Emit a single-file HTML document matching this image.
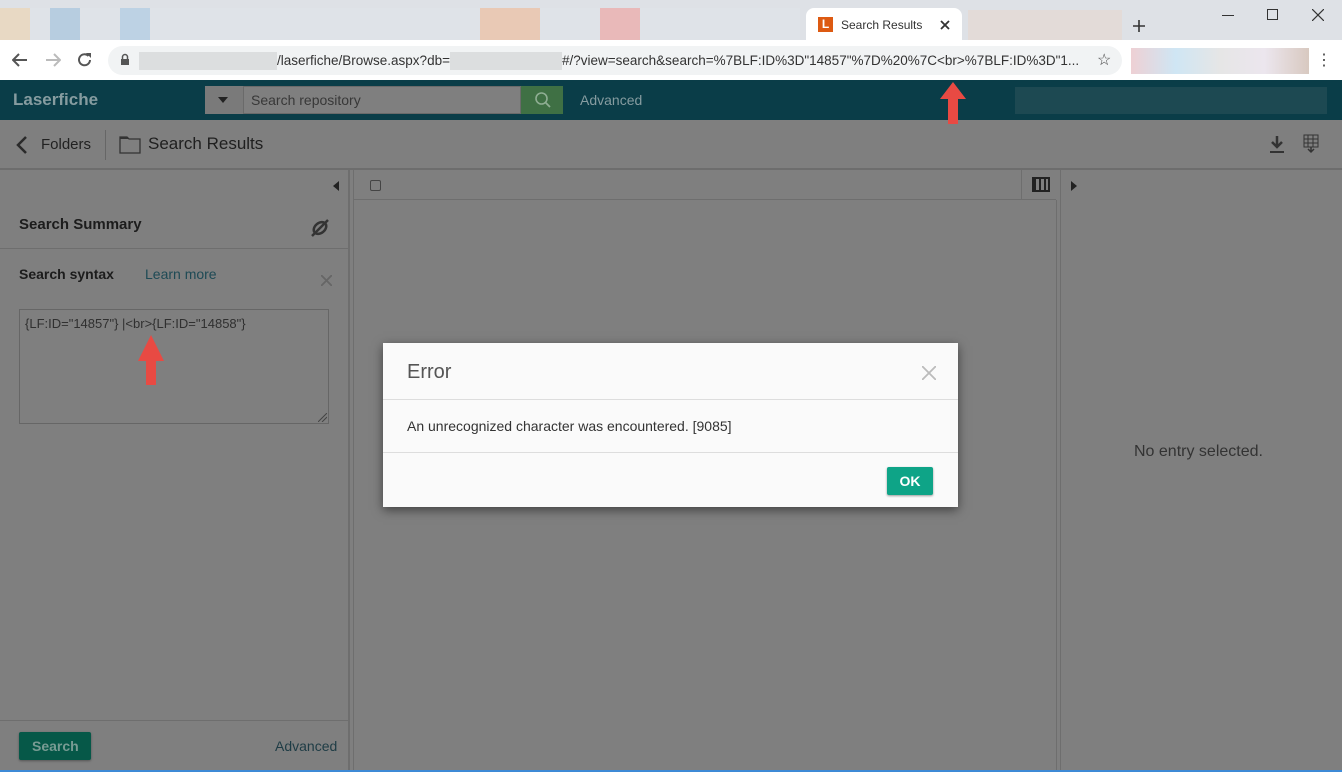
<!DOCTYPE html><html><head><style>
body{margin:0;width:1342px;height:772px;overflow:hidden;position:relative;font-family:"Liberation Sans",sans-serif;background:#7f7f7f}
div{position:absolute;box-sizing:border-box}
.t{white-space:nowrap}
svg{position:absolute}
</style></head><body>
<!-- tab bar -->
<div style="left:0;top:0;width:1342px;height:40px;background:#dee1e6"></div>
<div style="left:0;top:8px;width:800px;height:32px;background:linear-gradient(90deg,#e8d9c4 0 30px,#dfe3e8 30px 50px,#b7cde0 50px 80px,#dfe3e8 80px 120px,#bdd2e4 120px 150px,#dfe3e8 150px 480px,#e9c9b5 480px 540px,#dfe3e8 540px 600px,#e9b9b9 600px 640px,#dfe3e8 640px)"></div>
<div style="left:806px;top:8px;width:156px;height:32px;background:#fff;border-radius:8px 8px 0 0"></div>
<div style="left:818px;top:17px;width:15px;height:15px;background:#dd5a12;color:#fff;font-size:12px;font-weight:bold;text-align:center;line-height:15px">L</div>
<div class="t" style="left:841px;top:18px;font-size:12px;color:#333">Search Results</div>
<svg style="left:940px;top:20px" width="10" height="10"><path d="M1 1L9 9M9 1L1 9" stroke="#333" stroke-width="1.8"/></svg>
<div style="left:968px;top:10px;width:154px;height:30px;background:#e6d8d2;opacity:.7"></div>
<svg style="left:1132px;top:19px" width="14" height="14"><path d="M7 1V13M1 7H13" stroke="#333" stroke-width="1.6"/></svg>
<div style="left:1222px;top:15px;width:12px;height:1px;background:#333"></div>
<div style="left:1267px;top:9px;width:11px;height:11px;border:1px solid #333"></div>
<svg style="left:1312px;top:9px" width="12" height="12"><path d="M0 0L12 12M12 0L0 12" stroke="#333" stroke-width="1.2"/></svg>
<!-- address bar -->
<div style="left:0;top:40px;width:1342px;height:40px;background:#fff"></div>
<svg style="left:12px;top:53px" width="16" height="14"><path d="M15 7H2M7 1L1 7L7 13" stroke="#555" stroke-width="2" fill="none"/></svg>
<svg style="left:45px;top:53px" width="16" height="14"><path d="M1 7H14M9 1L15 7L9 13" stroke="#bbb" stroke-width="2" fill="none"/></svg>
<svg style="left:77px;top:52px" width="16" height="16"><path d="M13 8A5.5 5.5 0 1 1 11.5 4" stroke="#555" stroke-width="2" fill="none"/><path d="M9 1H14V6Z" fill="#555"/></svg>
<div style="left:108px;top:46px;width:1014px;height:29px;background:#f1f3f4;border-radius:15px"></div>
<svg style="left:120px;top:53px" width="10" height="12"><path d="M2.5 6V4A2.5 2.5 0 0 1 7.5 4V6" stroke="#555" stroke-width="1.5" fill="none"/><rect x="1" y="6" width="8" height="6" fill="#555"/></svg>
<div style="left:139px;top:52px;width:138px;height:18px;background:#dcdedf"></div>
<div class="t" style="left:277px;top:53px;font-size:13.5px;color:#333">/laserfiche/Browse.aspx?db=</div>
<div style="left:450px;top:52px;width:112px;height:18px;background:#dcdedf"></div>
<div class="t" style="left:562px;top:53px;font-size:13.5px;color:#333">#/?view=search&amp;search=%7BLF:ID%3D"14857"%7D%20%7C&lt;br&gt;%7BLF:ID%3D"1...</div>
<div class="t" style="left:1097px;top:50px;font-size:16px;color:#444">☆</div>
<div style="left:1131px;top:48px;width:178px;height:26px;background:linear-gradient(90deg,#eed0d4,#cfe6f4,#e6e6e6,#ece6ee,#d8c9c0)"></div>
<div class="t" style="left:1316px;top:50px;font-size:16px;color:#444">⋮</div>
<!-- header -->
<div style="left:0;top:80px;width:1342px;height:40px;background:#0a3d48"></div>
<div class="t" style="left:13px;top:90px;font-size:17px;font-weight:bold;color:#869ca0">Laserfiche</div>
<div style="left:205px;top:86px;width:38px;height:28px;background:#7a7a7a"></div>
<svg style="left:218px;top:97px" width="10" height="6"><path d="M0 0H10L5 6Z" fill="#222"/></svg>
<div style="left:243px;top:86px;width:278px;height:28px;background:#7f7f7f;border:1px solid #6a6a6a"></div>
<div class="t" style="left:251px;top:92px;font-size:14px;color:#383838">Search repository</div>
<div style="left:521px;top:86px;width:42px;height:28px;background:#3f7044"></div>
<svg style="left:534px;top:91px" width="18" height="18"><circle cx="7.5" cy="7.5" r="5.5" stroke="#8fae93" stroke-width="1.6" fill="none"/><path d="M11.5 11.5L16 16" stroke="#8fae93" stroke-width="1.8"/></svg>
<div class="t" style="left:580px;top:92px;font-size:14px;color:#869ca0">Advanced</div>
<div style="left:1015px;top:87px;width:312px;height:27px;background:#1d4952"></div>
<!-- toolbar -->
<div style="left:0;top:168px;width:1342px;height:2px;background:#6d6d6d"></div>
<svg style="left:16px;top:136px" width="12" height="18"><path d="M10 1L2 9L10 17" stroke="#2a2a2a" stroke-width="2.5" fill="none"/></svg>
<div class="t" style="left:41px;top:136px;font-size:15px;color:#222">Folders</div>
<div style="left:105px;top:130px;width:1px;height:30px;background:#666"></div>
<svg style="left:119px;top:134px" width="22" height="20"><path d="M1 3H8L10 5H21V19H1Z" stroke="#333" stroke-width="1.3" fill="none"/><path d="M1 3H8L10 5H1Z" fill="#333"/></svg>
<div class="t" style="left:148px;top:134px;font-size:17px;color:#1f1f1f">Search Results</div>
<svg style="left:1268px;top:135px" width="18" height="20"><path d="M9 1V11M4 7L9 12L14 7" stroke="#333" stroke-width="2.5" fill="none"/><path d="M2 17H16" stroke="#333" stroke-width="2"/></svg>
<svg style="left:1303px;top:134px" width="16" height="20"><rect x="1" y="1" width="14" height="12" stroke="#333" fill="none"/><path d="M1 5H15M1 9H15M5 1V13M10 1V13" stroke="#333"/><path d="M8 13V17M5 15L8 18L11 15" stroke="#333" stroke-width="1.5" fill="none"/></svg>
<!-- left pane -->
<div style="left:348px;top:170px;width:2px;height:600px;background:#6e6e6e"></div>
<div style="left:353px;top:170px;width:1px;height:600px;background:#6e6e6e"></div>
<svg style="left:333px;top:181px" width="6" height="10"><path d="M6 0V10L0 5Z" fill="#222"/></svg>
<div class="t" style="left:19px;top:216px;font-size:15px;font-weight:bold;color:#1c1c1c">Search Summary</div>
<svg style="left:309px;top:218px" width="22" height="20"><ellipse cx="11" cy="10" rx="7" ry="5" transform="rotate(-40 11 10)" stroke="#333" stroke-width="2.5" fill="none"/><path d="M3 18L19 2" stroke="#333" stroke-width="2.5"/></svg>
<div style="left:0;top:248px;width:348px;height:1px;background:#6e6e6e"></div>
<div class="t" style="left:19px;top:266px;font-size:14px;font-weight:bold;color:#1c1c1c">Search syntax</div>
<div class="t" style="left:145px;top:266px;font-size:14px;color:#1e4a55">Learn more</div>
<svg style="left:321px;top:275px" width="11" height="11"><path d="M0 0L11 11M11 0L0 11" stroke="#666" stroke-width="1.8"/></svg>
<div style="left:19px;top:309px;width:310px;height:115px;border:1px solid #666"></div>
<div class="t" style="left:25px;top:316px;font-size:13px;color:#303030">{LF:ID="14857"} |&lt;br&gt;{LF:ID="14858"}</div>
<svg style="left:318px;top:413px" width="9" height="9"><path d="M0 9L9 0M4 9L9 4" stroke="#444"/></svg>
<div style="left:0;top:720px;width:348px;height:1px;background:#6e6e6e"></div>
<div style="left:19px;top:732px;width:72px;height:28px;background:#065848;border-radius:2px;box-shadow:0 1px 2px #555"></div>
<div class="t" style="left:32px;top:738px;font-size:14px;font-weight:bold;color:#789b93">Search</div>
<div class="t" style="left:275px;top:738px;font-size:14px;color:#1e3c45">Advanced</div>
<!-- middle -->
<div style="left:354px;top:199px;width:702px;height:1px;background:#6e6e6e"></div>
<div style="left:370px;top:180px;width:11px;height:11px;border:1px solid #444;border-radius:2px"></div>
<div style="left:1021px;top:170px;width:40px;height:30px;border-left:1px solid #6e6e6e;border-right:1px solid #6e6e6e"></div>
<div style="left:1032px;top:177px;width:18px;height:15px;border:2px solid #222;background:repeating-linear-gradient(90deg,#222 0 2px,transparent 2px 5px)"></div>
<div style="left:1056px;top:200px;width:1px;height:570px;background:#6e6e6e"></div>
<div style="left:1060px;top:170px;width:1px;height:600px;background:#6e6e6e"></div>
<svg style="left:1071px;top:181px" width="6" height="10"><path d="M0 0V10L6 5Z" fill="#222"/></svg>
<div class="t" style="left:1134px;top:443px;font-size:16px;color:#333">No entry selected.</div>
<div style="left:0;top:770px;width:1342px;height:2px;background:#3d8ad6"></div>
<!-- arrows -->
<svg style="left:0;top:0" width="1342" height="772">
<polygon points="953,82 966,99 958,99 958,124 948,124 948,99 940,99" fill="#e84a43"/>
<polygon points="151,335 164,361 156,361 156,385 146,385 146,361 138,361" fill="#e84a43"/>
</svg>
<!-- dialog -->
<div style="left:383px;top:343px;width:575px;height:164px;background:#fafafa;box-shadow:0 3px 10px rgba(0,0,0,.5)"></div>
<div class="t" style="left:407px;top:361px;font-size:20px;color:#555">Error</div>
<svg style="left:922px;top:366px" width="14" height="14"><path d="M0 0L14 14M14 0L0 14" stroke="#bbb" stroke-width="1.8"/></svg>
<div style="left:383px;top:399px;width:575px;height:1px;background:#ddd"></div>
<div class="t" style="left:407px;top:418px;font-size:14px;color:#333">An unrecognized character was encountered. [9085]</div>
<div style="left:383px;top:452px;width:575px;height:1px;background:#ddd"></div>
<div style="left:887px;top:467px;width:46px;height:28px;background:#0ea487;border-radius:2px;box-shadow:0 1px 2px #999;color:#fff;font-weight:bold;font-size:14px;text-align:center;line-height:28px">OK</div>
</body></html>
